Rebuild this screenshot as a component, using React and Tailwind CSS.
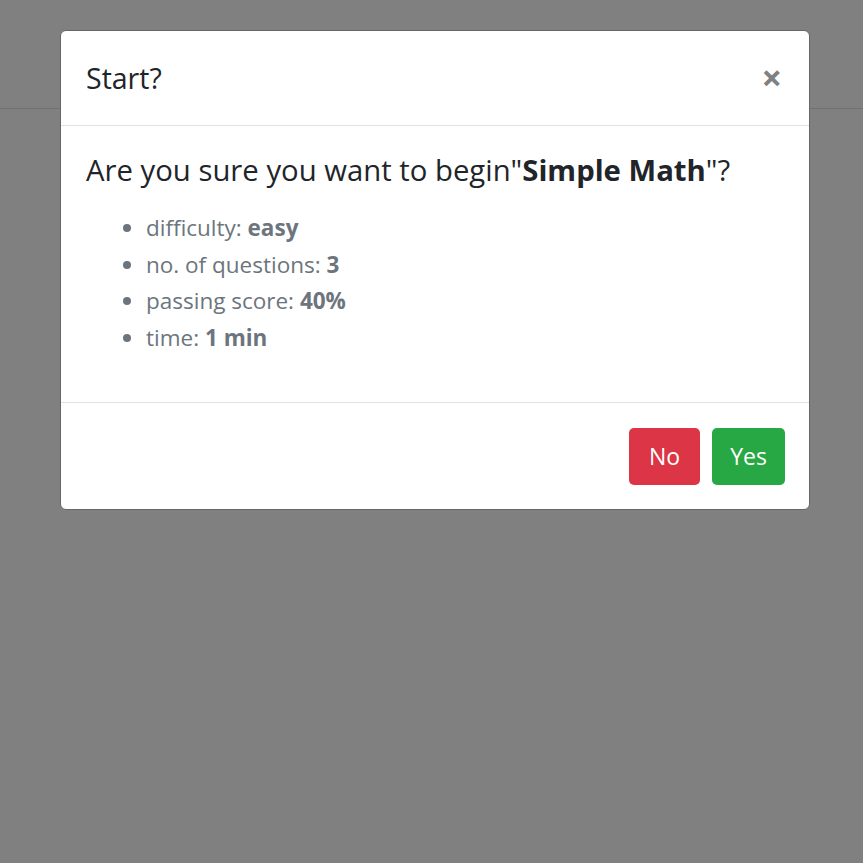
export default function App() {
  const items = [
    ["difficulty: ", "easy"],
    ["no. of questions: ", "3"],
    ["passing score: ", "40%"],
    ["time: ", "1 min"],
  ];
  return (
    <div
      className="relative w-full min-h-[863px] bg-[#808080] overflow-hidden"
      style={{ fontFamily: '"Open Sans", "Noto Sans", sans-serif' }}
    >
      <div className="h-[109px] border-b border-[#717171]" />
      <div className="absolute left-[60px] top-[30px] w-[750px] bg-white border border-[#666] rounded-[6px]">
        <div className="h-[95px] px-[25px] flex items-center justify-between border-b border-[#dee2e6]">
          <h5 className="text-[28.5px] leading-none text-[#212529] font-medium">Start?</h5>
          <span className="text-[36px] font-bold leading-none text-[#808080] mr-[2px]">×</span>
        </div>
        <div className="h-[277px] px-[25px] pt-[26px] border-b border-[#dee2e6]">
          <h4 className="text-[29.3px] leading-[36px] text-[#212529] font-medium">
            Are you sure you want to begin"<b className="font-bold">Simple Math</b>"?
          </h4>
          <ul className="mt-[22px] pl-[60px] list-disc text-[#6c757d] text-[22.5px] leading-[36.5px]">
            {items.map(([k, v]) => (
              <li key={k}>
                {k}
                <b className="font-bold">{v}</b>
              </li>
            ))}
          </ul>
        </div>
        <div className="h-[106px] px-[24px] flex items-center justify-end gap-[12px]">
          <button className="h-[57px] w-[71px] rounded-[5px] bg-[#dc3545] text-white text-[23px]">No</button>
          <button className="h-[57px] w-[73px] rounded-[5px] bg-[#28a745] text-white text-[23px]">Yes</button>
        </div>
      </div>
    </div>
  );
}
